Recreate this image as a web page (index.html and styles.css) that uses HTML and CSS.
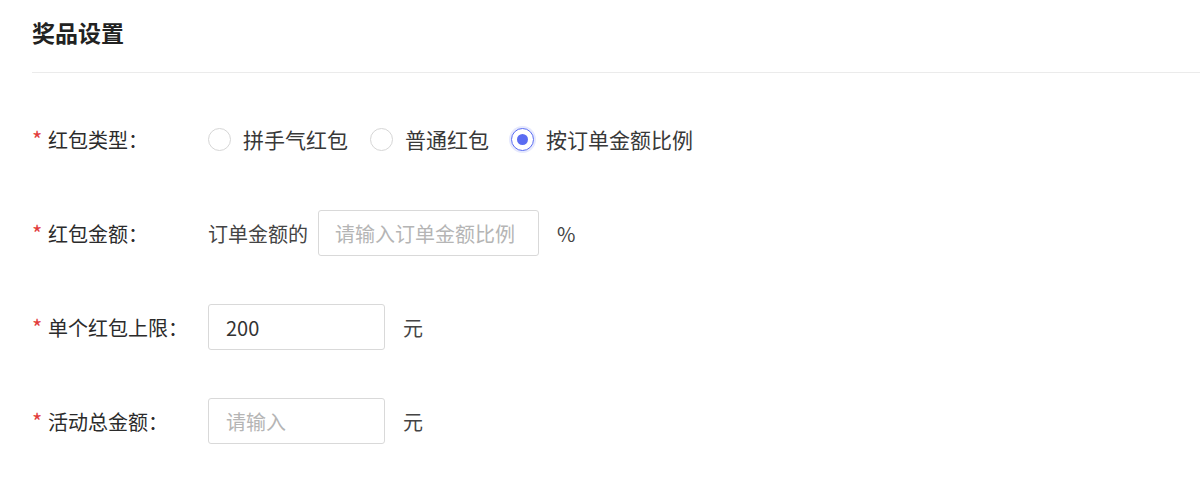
FILE: index.html
```html
<!DOCTYPE html>
<html lang="zh-CN">
<head>
<meta charset="utf-8">
<title>奖品设置</title>
<link rel="stylesheet" href="styles.css">
</head>
<body>
<div class="page">
  <h2 class="title">奖品设置</h2>
  <div class="divider"></div>
  <div class="form">
    <div class="row">
      <div class="label"><span class="req">*</span>红包类型：</div>
      <div class="field">
        <label class="radio"><span class="circle"></span><span class="rtext">拼手气红包</span></label>
        <label class="radio"><span class="circle"></span><span class="rtext">普通红包</span></label>
        <label class="radio checked"><span class="circle"></span><span class="rtext">按订单金额比例</span></label>
      </div>
    </div>
    <div class="row">
      <div class="label"><span class="req">*</span>红包金额：</div>
      <div class="field">
        <span class="prefix">订单金额的</span>
        <div class="input wide placeholder">请输入订单金额比例</div>
        <span class="unit">%</span>
      </div>
    </div>
    <div class="row">
      <div class="label"><span class="req">*</span>单个红包上限：</div>
      <div class="field">
        <div class="input">200</div>
        <span class="unit">元</span>
      </div>
    </div>
    <div class="row">
      <div class="label"><span class="req">*</span>活动总金额：</div>
      <div class="field">
        <div class="input placeholder">请输入</div>
        <span class="unit">元</span>
      </div>
    </div>
  </div>
</div>
</body>
</html>
```

FILE: styles.css
```css
html, body {
  margin: 0;
  padding: 0;
  background: #ffffff;
}
body {
  font-family: "Noto Sans CJK SC", "Noto Sans", sans-serif;
  color: #333333;
}
.page {
  padding: 16px 0 0 32px;
}
.title {
  margin: 0;
  font-size: 23px;
  line-height: 32px;
  font-weight: 700;
  color: #222222;
}
.divider {
  margin-top: 24px;
  height: 1px;
  background: #ebebeb;
}
.form {
  padding-top: 43px;
  display: flex;
  flex-direction: column;
  gap: 48px;
}
.row {
  display: flex;
  align-items: center;
  height: 46px;
}
.label {
  width: 176px;
  flex: none;
  font-size: 20px;
  color: #2b2b2b;
  display: flex;
  align-items: center;
}
.req {
  color: #e23c3c;
  font-size: 22px;
  width: 16px;
  line-height: 1;
  position: relative;
  top: -1px;
}
.field {
  display: flex;
  align-items: center;
  font-size: 20px;
  color: #333333;
}
.radio {
  display: flex;
  align-items: center;
  margin-right: 22px;
}
.circle {
  box-sizing: border-box;
  width: 23px;
  height: 23px;
  border: 1px solid #d6d6d6;
  border-radius: 50%;
  margin-right: 12px;
  background: #fff;
  display: flex;
  align-items: center;
  justify-content: center;
}
.radio.checked .circle {
  border: 1.5px solid #5a6cf2;
  box-shadow: 0 0 0 2px #e6e9fd;
}
.radio.checked .circle::after {
  content: "";
  width: 11px;
  height: 11px;
  border-radius: 50%;
  background: #5a6cf2;
}
.rtext {
  color: #383838;
  font-size: 21px;
}
.prefix {
  margin-right: 10px;
  color: #444;
}
.input {
  box-sizing: border-box;
  width: 177px;
  height: 46px;
  border: 1px solid #d9d9d9;
  border-radius: 3px;
  padding: 0 17px;
  display: flex;
  align-items: center;
  font-size: 20px;
  color: #333;
}
.input.wide {
  width: 221px;
  padding: 0 16px;
}
.input.placeholder {
  color: #b5b5b5;
}
.unit {
  margin-left: 18px;
  color: #444;
}
```
